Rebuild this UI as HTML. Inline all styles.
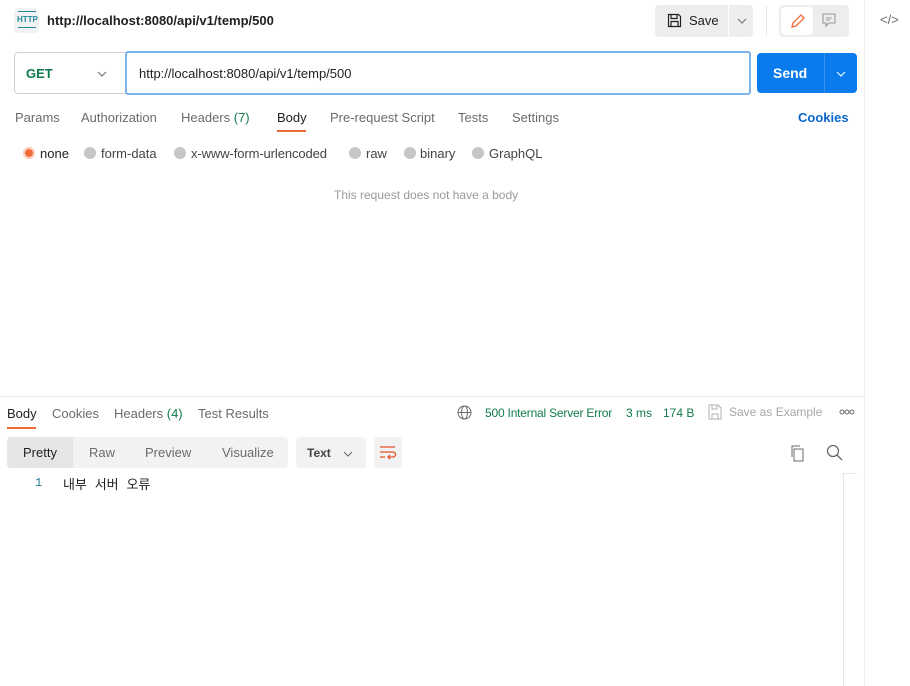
<!DOCTYPE html>
<html><head><meta charset="utf-8"><style>
*{box-sizing:border-box;margin:0;padding:0}
body{width:910px;height:686px;background:#fff;font-family:"Liberation Sans","Noto Sans CJK KR",sans-serif;position:relative;overflow:hidden;color:#212121}
.a{position:absolute}
.t{font-size:13px;color:#6b6b6b}
</style></head><body>
<div class="a" style="left:864px;top:0;width:1px;height:686px;background:#ededed"></div>
<div class="a" style="left:880px;top:12px;font-size:13px;color:#6b6b6b">&lt;/&gt;</div>
<div class="a" style="left:14px;top:8px;width:25px;height:25px;background:#f2f2f2;border-radius:4px;"></div>
<div class="a" style="left:17px;top:15px;font-size:8px;color:#1f8a9c;font-weight:bold">HTTP</div>
<div class="a" style="left:18px;top:11px;width:18px;height:1px;background:#1f8a9c"></div>
<div class="a" style="left:18px;top:27px;width:18px;height:1px;background:#1f8a9c"></div>
<div class="a" style="left:47px;top:13px;font-size:13px;font-weight:bold;color:#212121">http://localhost:8080/api/v1/temp/500</div>
<div class="a" style="left:655px;top:5px;width:73px;height:32px;background:#ededed;border-radius:4px 0 0 4px"></div>
<div class="a" style="left:729px;top:5px;width:24px;height:32px;background:#ededed;border-radius:0 4px 4px 0"></div>
<svg class="a" style="left:667px;top:13px" width="15" height="15" viewBox="0 0 15 15"><path d="M1.5 1.5h10l2 2v10h-12z M4 1.5v4h6v-4 M4 13.5v-5h7v5" fill="none" stroke="#212121" stroke-width="1.2"/></svg>
<div class="a" style="left:689px;top:13px;font-size:13px;color:#212121">Save</div>
<svg class="a" style="left:737px;top:17px" width="10" height="8"><path d="M1 2l4 4 4-4" fill="none" stroke="#6b6b6b"/></svg>
<div class="a" style="left:766px;top:6px;width:1px;height:30px;background:#e6e6e6"></div>
<div class="a" style="left:779px;top:5px;width:70px;height:32px;background:#ededed;border-radius:4px"></div>
<div class="a" style="left:781px;top:7px;width:32px;height:28px;background:#fff;border-radius:4px"></div>
<svg class="a" style="left:788px;top:12px" width="18" height="18"><path d="M4 15l1-4 8-8 3 3-8 8z" fill="none" stroke="#f26b3a" stroke-width="1.3"/></svg>
<svg class="a" style="left:821px;top:12px" width="16" height="16"><path d="M2 2h12v9H8l-3 3v-3H2z M5 6h6 M5 8h4" fill="none" stroke="#9a9a9a" stroke-width="1.1"/></svg>
<div class="a" style="left:14px;top:52px;width:112px;height:42px;border:1px solid #d0d0d0;border-right:none;border-radius:4px 0 0 4px"></div>
<div class="a" style="left:26px;top:66px;font-size:13px;font-weight:bold;color:#0f7b4b">GET</div>
<svg class="a" style="left:97px;top:70px" width="10" height="8"><path d="M1 2l4 4 4-4" fill="none" stroke="#6b6b6b"/></svg>
<div class="a" style="left:125px;top:51px;width:626px;height:44px;border:2px solid #7bb3ef;border-radius:3px"></div>
<div class="a" style="left:139px;top:66px;font-size:13px;color:#212121">http://localhost:8080/api/v1/temp/500</div>
<div class="a" style="left:757px;top:53px;width:100px;height:40px;background:#097bed;border-radius:4px"></div>
<div class="a" style="left:824px;top:53px;width:1px;height:40px;background:#3b91e8"></div>
<div class="a" style="left:773px;top:65px;font-size:14px;font-weight:bold;color:#fff">Send</div>
<svg class="a" style="left:836px;top:70px" width="10" height="8"><path d="M1 2l4 4 4-4" fill="none" stroke="#fff"/></svg>
<div class="a t" style="left:15px;top:110px">Params</div>
<div class="a t" style="left:81px;top:110px">Authorization</div>
<div class="a t" style="left:181px;top:110px">Headers <span style="color:#0f7b4b">(7)</span></div>
<div class="a" style="left:277px;top:110px;font-size:13px;color:#212121">Body</div>
<div class="a" style="left:277px;top:130px;width:29px;height:2px;background:#f26b3a"></div>
<div class="a t" style="left:330px;top:110px">Pre-request Script</div>
<div class="a t" style="left:458px;top:110px">Tests</div>
<div class="a t" style="left:512px;top:110px">Settings</div>
<div class="a" style="left:798px;top:110px;font-size:13px;color:#0b66d0;font-weight:bold">Cookies</div>
<div class="a" style="left:23px;top:147px;width:12px;height:12px;border-radius:50%;background:#f26b3a;box-shadow:0 0 0 2px #fbd7c9 inset"></div>
<div class="a" style="left:40px;top:146px;font-size:13px;color:#212121">none</div>
<div class="a" style="left:84px;top:147px;width:12px;height:12px;border-radius:50%;background:#c6c6c6"></div>
<div class="a t" style="left:101px;top:146px;color:#444">form-data</div>
<div class="a" style="left:174px;top:147px;width:12px;height:12px;border-radius:50%;background:#c6c6c6"></div>
<div class="a t" style="left:191px;top:146px;color:#444;letter-spacing:-0.1px">x-www-form-urlencoded</div>
<div class="a" style="left:349px;top:147px;width:12px;height:12px;border-radius:50%;background:#c6c6c6"></div>
<div class="a t" style="left:366px;top:146px;color:#444">raw</div>
<div class="a" style="left:404px;top:147px;width:12px;height:12px;border-radius:50%;background:#c6c6c6"></div>
<div class="a t" style="left:420px;top:146px;color:#444">binary</div>
<div class="a" style="left:472px;top:147px;width:12px;height:12px;border-radius:50%;background:#c6c6c6"></div>
<div class="a t" style="left:489px;top:146px;color:#444">GraphQL</div>
<div class="a" style="left:334px;top:188px;font-size:12px;color:#9a9a9a">This request does not have a body</div>
<div class="a" style="left:0;top:396px;width:864px;height:1px;background:#ededed"></div>
<div class="a" style="left:7px;top:406px;font-size:13px;color:#212121">Body</div>
<div class="a" style="left:7px;top:427px;width:29px;height:2px;background:#f26b3a"></div>
<div class="a t" style="left:52px;top:406px">Cookies</div>
<div class="a t" style="left:114px;top:406px">Headers <span style="color:#0f7b4b">(4)</span></div>
<div class="a t" style="left:198px;top:406px">Test Results</div>
<svg class="a" style="left:457px;top:405px" width="15" height="15"><circle cx="7.5" cy="7.5" r="6.5" fill="none" stroke="#6b6b6b"/><ellipse cx="7.5" cy="7.5" rx="3" ry="6.5" fill="none" stroke="#6b6b6b"/><path d="M1 7.5h13" stroke="#6b6b6b"/></svg>
<div class="a" style="left:485px;top:406px;font-size:12px;color:#0f7b4b;letter-spacing:-0.2px">500 Internal Server Error</div>
<div class="a" style="left:626px;top:406px;font-size:12px;color:#0f7b4b">3 ms</div>
<div class="a" style="left:663px;top:406px;font-size:12px;color:#0f7b4b">174 B</div>
<svg class="a" style="left:708px;top:404px" width="14" height="16"><path d="M1 1h9l3 3v11H1z M4 1v4h5V1 M4 15v-5h6v5" fill="none" stroke="#b0b0b0"/></svg>
<div class="a" style="left:729px;top:405px;font-size:12px;color:#a6a6a6">Save as Example</div>
<svg class="a" style="left:839px;top:409px" width="16" height="6"><circle cx="3" cy="3" r="2" fill="none" stroke="#6b6b6b"/><circle cx="8" cy="3" r="2" fill="none" stroke="#6b6b6b"/><circle cx="13" cy="3" r="2" fill="none" stroke="#6b6b6b"/></svg>
<div class="a" style="left:7px;top:437px;width:281px;height:31px;background:#f2f2f2;border-radius:4px"></div>
<div class="a" style="left:7px;top:437px;width:66px;height:31px;background:#e6e6e6;border-radius:4px 0 0 4px"></div>
<div class="a" style="left:23px;top:445px;font-size:13px;color:#212121">Pretty</div>
<div class="a t" style="left:89px;top:445px">Raw</div>
<div class="a t" style="left:145px;top:445px">Preview</div>
<div class="a t" style="left:222px;top:445px">Visualize</div>
<div class="a" style="left:296px;top:437px;width:70px;height:31px;background:#f2f2f2;border-radius:4px"></div>
<div class="a" style="left:307px;top:446px;font-size:12px;color:#444;font-weight:bold">Text</div>
<svg class="a" style="left:343px;top:450px" width="10" height="8"><path d="M1 2l4 4 4-4" fill="none" stroke="#6b6b6b"/></svg>
<div class="a" style="left:374px;top:437px;width:28px;height:31px;background:#f2f2f2;border-radius:4px"></div>
<svg class="a" style="left:379px;top:445px" width="18" height="16"><path d="M1 2h15 M1 7h13a2.5 2.5 0 010 5h-4 M11 10l-2 2 2 2 M1 12h5" fill="none" stroke="#e2532a" stroke-width="1.3"/></svg>
<svg class="a" style="left:790px;top:444px" width="16" height="18"><rect x="4" y="5" width="9" height="12" fill="none" stroke="#6b6b6b"/><path d="M2 13V2h8" fill="none" stroke="#6b6b6b"/></svg>
<svg class="a" style="left:826px;top:444px" width="17" height="17"><circle cx="7" cy="7" r="5.5" fill="none" stroke="#6b6b6b" stroke-width="1.3"/><path d="M11 11l5 5" stroke="#6b6b6b" stroke-width="1.3"/></svg>
<div class="a" style="left:843px;top:473px;width:1px;height:213px;background:#e6e6e6"></div>
<div class="a" style="left:843px;top:473px;width:14px;height:1px;background:#e6e6e6"></div>
<div class="a" style="left:35px;top:476px;font-size:12px;color:#1f7a8c;font-family:'Liberation Mono',monospace">1</div>
<div class="a" style="left:63px;top:474px;font-size:13px;color:#212121;font-family:'Liberation Mono','Noto Sans CJK KR',monospace">내부 서버 오류</div>
</body></html>
